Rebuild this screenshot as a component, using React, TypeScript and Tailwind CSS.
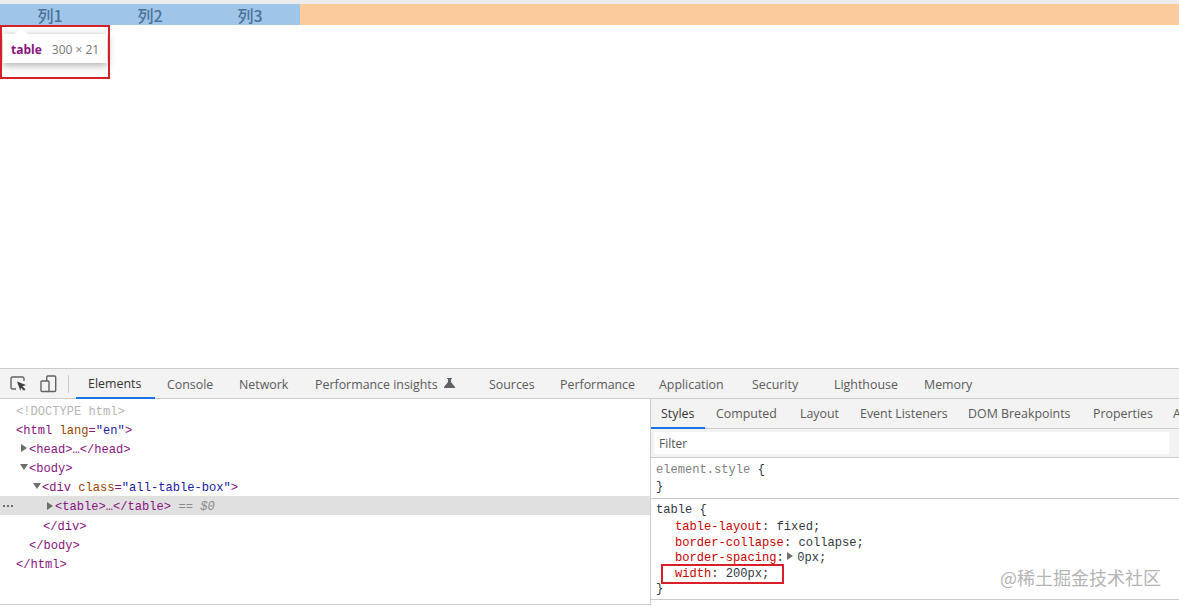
const uiFont = "font-['Open_Sans','Noto_Sans',sans-serif]";
const monoFont = "font-['Liberation_Mono','DejaVu_Sans_Mono',monospace]";

const mainTabs = [
  { name: "Elements", width: "w-[79px]" },
  { name: "Console", width: "w-[72px]" },
  { name: "Network", width: "w-[76px]" },
  { name: "Performance insights", width: "w-[174px]" },
  { name: "Sources", width: "w-[71px]" },
  { name: "Performance", width: "w-[99px]" },
  { name: "Application", width: "w-[93px]" },
  { name: "Security", width: "w-[82px]" },
  { name: "Lighthouse", width: "w-[90px]" },
  { name: "Memory", width: "w-[80px]" },
];

const sideTabs = [
  { name: "Styles", width: "w-[54px] pl-[10px]" },
  { name: "Computed", width: "w-[85px] pl-[11px]" },
  { name: "Layout", width: "w-[60px] pl-[10px]" },
  { name: "Event Listeners", width: "w-[108px] pl-[10px]" },
  { name: "DOM Breakpoints", width: "w-[125px] pl-[10px]" },
  { name: "Properties", width: "w-[80px] pl-[10px]" },
  { name: "A", width: "w-[12px] pl-[10px]" },
];

function Tri({ down }: { down?: boolean }) {
  return (
    <svg width="8" height="8" viewBox="0 0 8 8" className="shrink-0 mb-1">
      <path d={down ? "M0 1h8L4 7z" : "M1 0l6 4-6 4z"} fill="#6e6e6e" />
    </svg>
  );
}

function Tag({ children }: { children: React.ReactNode }) {
  return <span className="text-[#881280]">{children}</span>;
}

function Row({ pad, children, selected }: { pad: string; children: React.ReactNode; selected?: boolean }) {
  return (
    <div className={`flex items-center h-[19.2px] pt-[4px] whitespace-pre ${pad} ${selected ? "bg-[#e0e0e0]" : ""}`}>
      {children}
    </div>
  );
}

function Prop({ name, value, tri }: { name: string; value: string; tri?: boolean }) {
  return (
    <div className="flex items-center h-[15.8px] pl-[19px] whitespace-pre">
      <span className="text-[#c80000]">{name}</span>
      <span className="text-[#303942]">: </span>
      {tri && <span className="mr-[3px] -ml-[5px]"><Tri /></span>}
      <span className="text-[#303942]">{value};</span>
    </div>
  );
}

export default function App() {
  return (
    <div className={`relative w-[1179px] h-[606px] overflow-hidden bg-white flex flex-col ${uiFont}`}>
      <div className="h-1 bg-[#ececec]" />
      <div className="flex h-[21px] bg-[#fbcb9c]">
        <div className="flex w-[300px] bg-[#9fc5e8] text-[#4a7298] text-[16px] font-medium leading-[23px] font-['Noto_Sans_CJK_SC',sans-serif]">
          {["列1", "列2", "列3"].map((c) => (
            <div key={c} className="w-[100px] text-center">{c}</div>
          ))}
        </div>
      </div>

      {/* inspect tooltip */}
      <div className="absolute left-0 top-[25px] w-[110px] h-[54px] border-2 border-[#d9202a] z-10" />
      <div className="absolute left-[3px] top-[34px] w-[104px] h-[29px] pt-[2px] bg-white shadow-[0_2px_8px_rgba(0,0,0,0.35)] flex items-center pl-2 gap-[10px] text-xs">
        <span className="font-bold text-[#881280]">table</span>
        <span className="text-[#777]">300 × 21</span>
      </div>
      <div className="absolute left-[14px] top-[28px] w-0 h-0 border-x-[7px] border-x-transparent border-b-[6px] border-b-white" />

      <div className="flex-1" />

      {/* devtools */}
      <div className="flex flex-col h-[238px] border-t border-[#cbcbcb]">
        <div className="flex items-stretch h-[30px] bg-[#f3f3f3] border-b border-[#cbcbcb] text-[12.4px] text-[#5a5a5a]">
          <div className="flex items-center w-[76px] pl-[10px]">
            <svg width="17" height="17" viewBox="0 0 17 17" fill="none" className="mr-[13px]">
              <path d="M6 14H2.5A1.5 1.5 0 0 1 1 12.5v-9A1.5 1.5 0 0 1 2.5 2h10A1.5 1.5 0 0 1 14 3.5V6" stroke="#5f6368" strokeWidth="1.4" />
              <path d="M7 6.5l9 3.4-3.6 1.4 3 3-1.4 1.4-3-3L10.5 16z" fill="#3c4043" />
            </svg>
            <svg width="17" height="18" viewBox="0 0 17 18" fill="none">
              <rect x="6.7" y="1" width="9" height="15.5" rx="1" stroke="#5f6368" strokeWidth="1.4" />
              <rect x="1" y="6" width="8" height="10.5" rx="1" fill="#f3f3f3" stroke="#5f6368" strokeWidth="1.4" />
            </svg>
            <div className="ml-[11px] h-[18px] w-px bg-[#cbcbcb]" />
          </div>
          {mainTabs.map((t) => (
            <div
              key={t.name}
              className={`relative flex items-center gap-[6px] pl-3 pt-[3px] whitespace-nowrap ${t.width} ${t.name === "Elements" ? "text-[#333] border-b-2 border-[#1a73e8] h-[30px]" : ""}`}
            >
              {t.name}
              {t.name === "Performance insights" && (
                <svg width="11" height="10" viewBox="0 0 11 10" className="mb-[5px]">
                  <path d="M3 0h5v1H7v3L11 9v1H0V9l4-5V1H3z" fill="#5f6368" />
                </svg>
              )}
            </div>
          ))}
        </div>

        <div className="flex flex-1 min-h-0">
          {/* elements tree */}
          <div className={`w-[650px] h-[206px] border-b border-[#cbcbcb] pt-[1px] text-[12.1px] text-[#303942] ${monoFont}`}>
            <Row pad="pl-[16px]"><span className="text-[#b5b5b5]">{"<!DOCTYPE html>"}</span></Row>
            <Row pad="pl-[16px]">
              <Tag>{"<html "}</Tag><span className="text-[#994500]">lang</span><Tag>=</Tag><span className="text-[#1a1aa6]">"en"</span><Tag>{">"}</Tag>
            </Row>
            <Row pad="pl-[20px]"><span className="mr-[1px]"><Tri /></span><Tag>{"<head>…</head>"}</Tag></Row>
            <Row pad="pl-[20px]"><span className="mr-[1px]"><Tri down /></span><Tag>{"<body>"}</Tag></Row>
            <Row pad="pl-[33px]">
              <span className="mr-[1px]"><Tri down /></span>
              <Tag>{"<div "}</Tag><span className="text-[#994500]">class</span><Tag>=</Tag><span className="text-[#1a1aa6]">"all-table-box"</span><Tag>{">"}</Tag>
            </Row>
            <Row pad="pl-[3px]" selected>
              <span className="flex gap-[2px] w-[43px] mb-[3px]">
                <span className="w-[2px] h-[2px] bg-[#6e6e6e]" />
                <span className="w-[2px] h-[2px] bg-[#6e6e6e]" />
                <span className="w-[2px] h-[2px] bg-[#6e6e6e]" />
              </span>
              <span className="mr-[1px]"><Tri /></span>
              <Tag>{"<table>…</table>"}</Tag>
              <span className="text-[#8a8a8a] italic">{" == $0"}</span>
            </Row>
            <Row pad="pl-[43px]"><Tag>{"</div>"}</Tag></Row>
            <Row pad="pl-[29px]"><Tag>{"</body>"}</Tag></Row>
            <Row pad="pl-[16px]"><Tag>{"</html>"}</Tag></Row>
          </div>

          {/* styles pane */}
          <div className="flex-1 border-l border-[#cbcbcb] flex flex-col overflow-hidden">
            <div className={`flex h-[30px] shrink-0 bg-[#f3f3f3] border-b border-[#cbcbcb] text-[12.4px] text-[#5a5a5a] ${uiFont}`}>
              {sideTabs.map((t) => (
                <div
                  key={t.name}
                  className={`shrink-0 flex items-center pt-[2px] whitespace-nowrap ${t.width} ${t.name === "Styles" ? "text-[#333] border-b-2 border-[#1a73e8] h-[30px]" : ""}`}
                >
                  {t.name}
                </div>
              ))}
            </div>
            <div className="h-[29px] shrink-0 bg-[#f3f3f3] border-b border-[#cbcbcb] pl-[3px] pt-[3px]">
              <div className="w-[515px] h-[22px] bg-white pl-[5px] text-xs leading-[24px] text-[#555]">Filter</div>
            </div>
            <div className={`h-[41px] shrink-0 border-b border-[#cbcbcb] pl-[5px] pt-[4px] text-[12.1px] text-[#303942] ${monoFont}`}>
              <div className="h-[17px] leading-[17px]"><span className="text-[#808080]">element.style</span> {"{"}</div>
              <div className="h-[17px] leading-[17px]">{"}"}</div>
            </div>
            <div className={`h-[101px] shrink-0 border-b border-[#cbcbcb] pl-[5px] pt-[3px] text-[12.1px] text-[#303942] ${monoFont}`}>
              <div className="h-[17px] leading-[17px]">table {"{"}</div>
              <Prop name="table-layout" value="fixed" />
              <Prop name="border-collapse" value="collapse" />
              <Prop name="border-spacing" value="0px" tri />
              <Prop name="width" value="200px" />
              <div className="h-[15px] leading-[15px]">{"}"}</div>
            </div>
          </div>
        </div>
      </div>

      {/* annotations over the screenshot */}
      <div className="absolute left-[661px] top-[564px] w-[123px] h-[20px] border-2 border-[#d9202a]" />
      <div className="absolute left-[1000px] top-[565px] text-[18px] leading-[24px] text-[#b4b4b4] whitespace-nowrap font-['Noto_Sans_CJK_SC',sans-serif]">
        @稀土掘金技术社区
      </div>
    </div>
  );
}
